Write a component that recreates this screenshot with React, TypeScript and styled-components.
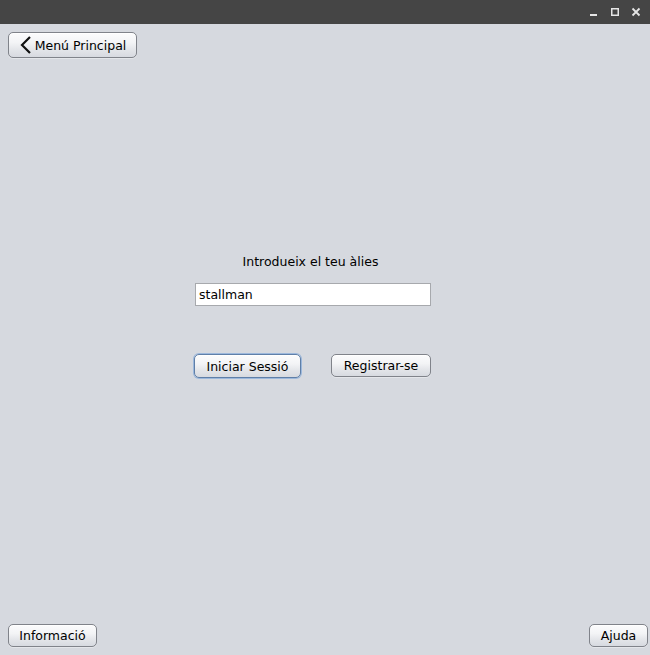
import React from "react";
import styled, { createGlobalStyle } from "styled-components";

const Global = createGlobalStyle`
  html, body { margin: 0; padding: 0; background: #d6d9df; }
  body { font-family: "DejaVu Sans", "Liberation Sans", sans-serif; font-size: 12.5px; color: #000; }
  * { box-sizing: border-box; }
`;

const Window = styled.div`
  width: 650px;
  height: 655px;
  display: flex;
  flex-direction: column;
  background: #d6d9df;
  overflow: hidden;
`;

const TitleBar = styled.div`
  height: 24px;
  flex: none;
  background: #454545;
  display: flex;
  align-items: center;
  justify-content: flex-end;
  gap: 11px;
  padding-right: 9px;
`;

const Content = styled.div`
  flex: 1;
  display: flex;
  flex-direction: column;
  padding: 8px 2px 8px 8px;
`;

const Header = styled.div`
  display: flex;
`;

const Button = styled.button<{ $w: number; $h?: number; $focused?: boolean }>`
  width: ${(p) => p.$w}px;
  height: ${(p) => p.$h ?? 23}px;
  padding: 0;
  display: flex;
  align-items: center;
  justify-content: center;
  gap: 2px;
  font-family: "DejaVu Sans", "Liberation Sans", sans-serif;
  font-size: 12.5px;
  color: #000;
  border-radius: 5px;
  border: 1px solid ${(p) => (p.$focused ? "#5f7fa8" : "#80838a")};
  box-shadow: ${(p) =>
    p.$focused
      ? "0 0 0 1px #9cb8dc, inset 0 1px 0 #ffffff"
      : "inset 0 1px 0 #ffffff, 0 1px 0 rgba(255,255,255,0.35)"};
  background: linear-gradient(to bottom, #fcfcfd 0%, #f3f4f6 40%, #e3e5e9 70%, #d7dae0 100%);
  cursor: default;
`;

const Middle = styled.div`
  margin-top: 196px;
  margin-left: 186px;
  width: 237px;
  display: flex;
  flex-direction: column;
`;

const Label = styled.div`
  text-align: center;
  line-height: 16px;
  padding-right: 4px;
`;

const Field = styled.input`
  margin-top: 13px;
  margin-left: 1px;
  width: 236px;
  height: 23px;
  border: 1px solid #a7a9ad;
  background: #fff;
  padding: 0 3px;
  font-family: "DejaVu Sans", "Liberation Sans", sans-serif;
  font-size: 12.5px;
  color: #000;
  outline: none;
`;

const ButtonRow = styled.div`
  margin-top: 48px;
  display: flex;
  justify-content: space-between;
  align-items: flex-start;
`;

const Footer = styled.div`
  margin-top: auto;
  display: flex;
  justify-content: space-between;
`;

const WinIcon = styled.svg`
  display: block;
`;

export default function App() {
  return (
    <>
      <Global />
      <Window>
        <TitleBar>
          <WinIcon width="10" height="10" viewBox="0 0 10 10">
            <rect x="1" y="7" width="7" height="2" fill="#e6e6e6" />
          </WinIcon>
          <WinIcon width="10" height="10" viewBox="0 0 10 10">
            <rect x="1.75" y="1.75" width="6.5" height="6.5" fill="none" stroke="#e6e6e6" strokeWidth="1.5" />
          </WinIcon>
          <WinIcon width="10" height="10" viewBox="0 0 10 10">
            <path d="M1.5 1.5 L8.5 8.5 M8.5 1.5 L1.5 8.5" stroke="#e6e6e6" strokeWidth="1.8" />
          </WinIcon>
        </TitleBar>
        <Content>
          <Header>
            <Button $w={129} $h={26}>
              <svg width="14" height="20" viewBox="0 0 14 20">
                <path d="M11 2 L3 10 L11 18" fill="none" stroke="#111" strokeWidth="2.2" />
              </svg>
              Menú Principal
            </Button>
          </Header>
          <Middle>
            <Label>Introdueix el teu àlies</Label>
            <Field defaultValue="stallman" />
            <ButtonRow>
              <Button $w={107} $h={24} $focused>
                Iniciar Sessió
              </Button>
              <Button $w={100}>Registrar-se</Button>
            </ButtonRow>
          </Middle>
          <Footer>
            <Button $w={89}>Informació</Button>
            <Button $w={59}>Ajuda</Button>
          </Footer>
        </Content>
      </Window>
    </>
  );
}
